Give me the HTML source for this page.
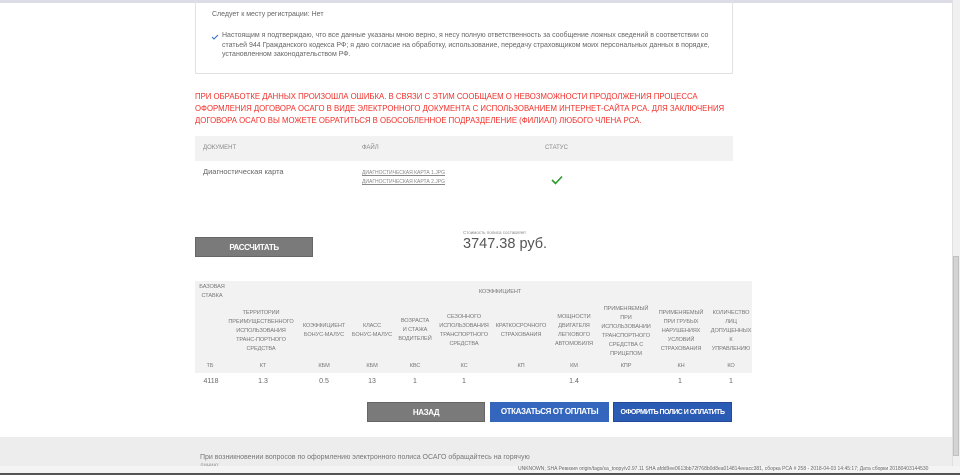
<!DOCTYPE html>
<html><head><meta charset="utf-8"><style>
*{margin:0;padding:0;box-sizing:border-box}
body{width:960px;height:475px;overflow:hidden;background:#fff;font-family:"Liberation Sans",sans-serif;position:relative;color:#666}
.a{position:absolute;white-space:nowrap}
.box{position:absolute;left:195px;top:-2px;width:538px;height:76px;border:1px solid #e2e2e2;border-top:none}
.red{position:absolute;left:195px;top:90px;color:#f0302a;font-size:8.6px;line-height:12px;transform:scaleX(0.905);transform-origin:0 0;white-space:nowrap}
.btn{position:absolute;height:20px;color:#fff;font-size:8px;font-weight:bold;text-align:center;line-height:20px;letter-spacing:-0.4px}
.h{font-size:5.6px;color:#777;text-align:center;line-height:9px;position:absolute;letter-spacing:-0.1px}
.v{font-size:7px;color:#666;position:absolute;text-align:center;width:50px}
</style></head><body>
<div class="a" style="left:0;top:0;width:952px;height:3px;background:#dcdce6"></div>
<div class="box"></div>
<div class="a" style="left:212px;top:11px;font-size:7px">Следует к месту регистрации: Нет</div>
<svg class="a" style="left:211px;top:34px" width="8" height="6"><path d="M1 3 L3 5 L7 1" stroke="#3a6fc4" stroke-width="1.1" fill="none"/></svg>
<div class="a" style="left:222px;top:31px;font-size:7px;line-height:9.5px;white-space:normal;width:500px">Настоящим я подтверждаю, что все данные указаны мною верно, я несу полную ответственность за сообщение ложных сведений в соответствии со статьей 944 Гражданского кодекса РФ; я даю согласие на обработку, использование, передачу страховщиком моих персональных данных в порядке, установленном законодательством РФ.</div>
<div class="red">ПРИ ОБРАБОТКЕ ДАННЫХ ПРОИЗОШЛА ОШИБКА. В СВЯЗИ С ЭТИМ СООБЩАЕМ О НЕВОЗМОЖНОСТИ ПРОДОЛЖЕНИЯ ПРОЦЕССА<br>ОФОРМЛЕНИЯ ДОГОВОРА ОСАГО В ВИДЕ ЭЛЕКТРОННОГО ДОКУМЕНТА С ИСПОЛЬЗОВАНИЕМ ИНТЕРНЕТ-САЙТА РСА. ДЛЯ ЗАКЛЮЧЕНИЯ<br>ДОГОВОРА ОСАГО ВЫ МОЖЕТЕ ОБРАТИТЬСЯ В ОБОСОБЛЕННОЕ ПОДРАЗДЕЛЕНИЕ (ФИЛИАЛ) ЛЮБОГО ЧЛЕНА РСА.</div>
<div class="a" style="left:195px;top:136px;width:538px;height:25px;background:#f2f2f2"></div>
<div class="a" style="left:203px;top:145px;font-size:6px;color:#888">ДОКУМЕНТ</div>
<div class="a" style="left:362px;top:145px;font-size:6px;color:#888">ФАЙЛ</div>
<div class="a" style="left:545px;top:145px;font-size:6px;color:#888">СТАТУС</div>
<div class="a" style="left:203px;top:167px;font-size:7.5px">Диагностическая карта</div>
<div class="a" style="left:362px;top:170px;font-size:5px;text-decoration:underline;color:#888">ДИАГНОСТИЧЕСКАЯ КАРТА 1.JPG</div>
<div class="a" style="left:362px;top:179px;font-size:5px;text-decoration:underline;color:#888">ДИАГНОСТИЧЕСКАЯ КАРТА 2.JPG</div>
<svg class="a" style="left:551px;top:175px" width="12" height="10"><path d="M1 5 L4.5 8.5 L11 1.5" stroke="#2a9a2a" stroke-width="1.6" fill="none"/></svg>
<div class="btn" style="left:195px;top:237px;width:118px;background:#7a7a7a;border:1px solid #666">РАССЧИТАТЬ</div>
<div class="a" style="left:463px;top:230px;font-size:4.5px;color:#888">Стоимость полиса составляет</div>
<div class="a" style="left:463px;top:236px;font-size:14.5px;color:#555">3747.38 руб.</div>
<div class="a" style="left:195px;top:281px;width:557px;height:92px;background:#f2f2f2"></div>
<div class="h" style="left:195px;top:283px;width:34px">БАЗОВАЯ<br>СТАВКА</div>
<div class="h" style="left:400px;top:288px;width:200px">КОЭФФИЦИЕНТ</div>
<div class="h" style="left:226px;top:309px;width:70px">ТЕРРИТОРИИ<br>ПРЕИМУЩЕСТВЕННОГО<br>ИСПОЛЬЗОВАНИЯ<br>ТРАНС-ПОРТНОГО<br>СРЕДСТВА</div>
<div class="h" style="left:298px;top:322px;width:52px">КОЭФФИЦИЕНТ<br>БОНУС-МАЛУС</div>
<div class="h" style="left:348px;top:322px;width:48px">КЛАСС<br>БОНУС-МАЛУС</div>
<div class="h" style="left:395px;top:317px;width:40px">ВОЗРАСТА<br>И СТАЖА<br>ВОДИТЕЛЕЙ</div>
<div class="h" style="left:433px;top:313px;width:62px">СЕЗОННОГО<br>ИСПОЛЬЗОВАНИЯ<br>ТРАНСПОРТНОГО<br>СРЕДСТВА</div>
<div class="h" style="left:492px;top:322px;width:58px">КРАТКОСРОЧНОГО<br>СТРАХОВАНИЯ</div>
<div class="h" style="left:548px;top:313px;width:52px">МОЩНОСТИ<br>ДВИГАТЕЛЯ<br>ЛЕГКОВОГО<br>АВТОМОБИЛЯ</div>
<div class="h" style="left:597px;top:305px;width:58px">ПРИМЕНЯЕМЫЙ<br>ПРИ<br>ИСПОЛЬЗОВАНИИ<br>ТРАНСПОРТНОГО<br>СРЕДСТВА С<br>ПРИЦЕПОМ</div>
<div class="h" style="left:653px;top:309px;width:56px">ПРИМЕНЯЕМЫЙ<br>ПРИ ГРУБЫХ<br>НАРУШЕНИЯХ<br>УСЛОВИЙ<br>СТРАХОВАНИЯ</div>
<div class="h" style="left:706px;top:309px;width:50px">КОЛИЧЕСТВО<br>ЛИЦ<br>ДОПУЩЕННЫХ<br>К<br>УПРАВЛЕНИЮ</div>
<div class="h" style="left:195px;top:362px;width:30px">ТБ</div>
<div class="h" style="left:236px;top:362px;width:54px">КТ</div>
<div class="h" style="left:298px;top:362px;width:52px">КБМ</div>
<div class="h" style="left:348px;top:362px;width:48px">КБМ</div>
<div class="h" style="left:395px;top:362px;width:40px">КВС</div>
<div class="h" style="left:433px;top:362px;width:62px">КС</div>
<div class="h" style="left:492px;top:362px;width:58px">КП</div>
<div class="h" style="left:548px;top:362px;width:52px">КМ</div>
<div class="h" style="left:597px;top:362px;width:58px">КПР</div>
<div class="h" style="left:653px;top:362px;width:56px">КН</div>
<div class="h" style="left:706px;top:362px;width:50px">КО</div>
<div class="v" style="left:186px;top:378px">4118</div>
<div class="v" style="left:238px;top:378px">1.3</div>
<div class="v" style="left:299px;top:378px">0.5</div>
<div class="v" style="left:347px;top:378px">13</div>
<div class="v" style="left:390px;top:378px">1</div>
<div class="v" style="left:439px;top:378px">1</div>
<div class="v" style="left:549px;top:378px">1.4</div>
<div class="v" style="left:655px;top:378px">1</div>
<div class="v" style="left:706px;top:378px">1</div>
<div class="btn" style="left:367px;top:402px;width:118px;background:#7a7a7a;border:1px solid #666">НАЗАД</div>
<div class="btn" style="left:490px;top:402px;width:119px;background:#3466be">ОТКАЗАТЬСЯ ОТ ОПЛАТЫ</div>
<div class="btn" style="left:613px;top:402px;width:119px;background:#2a5bb5;border:1px solid #224a99;font-size:7px;letter-spacing:-0.5px">ОФОРМИТЬ ПОЛИС И ОПЛАТИТЬ</div>
<div class="a" style="left:0;top:437px;width:952px;height:30px;background:#ededed"></div>
<div class="a" style="left:200px;top:454px;font-size:7px;color:#777">При возникновении вопросов по оформлению электронного полиса ОСАГО обращайтесь на горячую</div>
<div class="a" style="left:200px;top:463px;font-size:6px;color:#999">линию:</div>
<div class="a" style="left:0;top:466px;width:960px;height:7px;background:#f4f4f4"></div>
<div class="a" style="left:518px;top:466px;font-size:5px;color:#666">UNKNOWN; SHA Ревизия origin/tags/sa_toopy/v2.97.11 SHA afdd9ee0613bb72f768b0d8ea014814eeacc381, сборка РСА # 258 - 2018-04-03 14:45:17; Дата сборки 20180403144530</div>
<div class="a" style="left:0;top:473px;width:960px;height:2px;background:#555"></div>
<div class="a" style="left:952px;top:0;width:8px;height:466px;background:#f0f0f0;border-left:1px solid #e0e0e0"></div>
<div class="a" style="left:953px;top:256px;width:6px;height:200px;background:#d4d4d4;border:1px solid #c0c0c0"></div>
</body></html>
